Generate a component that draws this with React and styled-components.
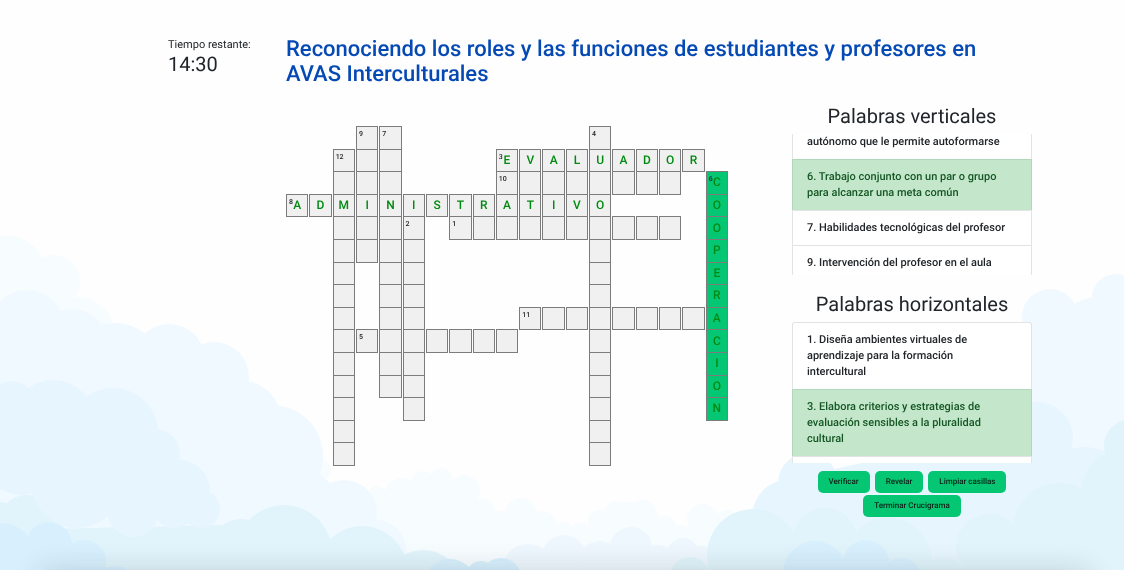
import React, { useState } from "react";
import styled, { createGlobalStyle } from "styled-components";

const GlobalStyle = createGlobalStyle`
  *, *::before, *::after { box-sizing: border-box; }
  html, body { margin: 0; }
  body {
    background: #fefefe;
    color: #212529;
    font-family: Roboto, "Liberation Sans", sans-serif;
    font-size: 11px;
    text-rendering: geometricPrecision;
  }
`;

const Sky = styled.svg`
  position: fixed;
  inset: 0;
  width: 100%;
  height: 100%;
  z-index: -1;
`;

const Page = styled.div`
  padding: 37px 92px 36px 168px;
`;

const Header = styled.header`
  display: flex;
`;

const Timer = styled.div`
  flex: 0 0 118px;
  line-height: 15px;
`;

const TimeLeft = styled.strong`
  display: block;
  font-size: 20px;
  font-weight: 400;
  line-height: 24px;
`;

const Title = styled.h1`
  flex: 1;
  margin: 0;
  padding-right: 16px;
  color: #0549b5;
  font-size: 22px;
  font-weight: 500;
  line-height: 25px;
`;

const Content = styled.main`
  display: flex;
  align-items: flex-start;
  gap: 64px;
  margin-top: 17px;
  padding-left: 118px;
`;

const Board = styled.div`
  flex: 1;
  display: grid;
  grid-template-columns: repeat(19, minmax(0, 1fr));
  grid-template-rows: repeat(15, minmax(0, 1fr));
  column-gap: 1px;
  aspect-ratio: 442 / 339;
  margin-top: 22px;
`;

const Cell = styled.label`
  position: relative;
  display: flex;
  margin-bottom: -1px;
`;

const CellNumber = styled.span`
  position: absolute;
  top: 4px;
  left: 3px;
  font-size: 7px;
  font-weight: 500;
  line-height: 9px;
  pointer-events: none;
`;

const Letter = styled.input`
  width: 100%;
  min-width: 0;
  margin: 0;
  padding: 0 0 1px;
  border: 1px solid #7c7c7c;
  border-radius: 0;
  outline: 0;
  background: ${(p) => (p.$solved ? "#05c773" : "#f0f0f0")};
  color: #008a10;
  font: 500 12px Roboto, "Liberation Sans", sans-serif;
  text-align: center;
  text-rendering: inherit;
  text-transform: uppercase;
`;

const Sidebar = styled.aside`
  flex: 0 0 240px;
`;

const ListTitle = styled.h2`
  margin: 0 0 6px;
  font-size: 20px;
  font-weight: 400;
  line-height: 24px;
  text-align: center;
`;

const ClueList = styled.ul`
  height: 141px;
  margin: 0 0 ${(p) => (p.$last ? 8 : 17)}px;
  padding: 0;
  overflow-y: auto;
  scrollbar-width: none;
  list-style: none;
`;

const Clue = styled.li`
  min-height: ${(p) => (p.$continued ? 25 : 35)}px;
  padding: ${(p) => (p.$continued ? 0 : 9)}px 20px 9px 14px;
  border: 1px solid ${(p) => (p.$solved ? "#b1d8ba" : "#e2e3e4")};
  border-width: ${(p) => (p.$continued ? 0 : 1)}px 1px 0;
  border-radius: ${(p) => (p.$first ? "3px 3px 0 0" : "0")};
  background: ${(p) => (p.$solved ? "#c4e7cb" : "#fff")};
  color: ${(p) => (p.$solved ? "#155724" : "#212529")};
  font-weight: 500;
  line-height: 16px;
`;

const Actions = styled.div`
  display: flex;
  flex-wrap: wrap;
  justify-content: center;
  gap: 2px 5px;
  padding: 0 20px;
`;

const Button = styled.button`
  height: 22px;
  padding: 0 11px 1px;
  border: 0;
  border-radius: 5px;
  background: #05c773;
  color: #0c2418;
  font: 500 8px/12px Roboto, "Liberation Sans", sans-serif;
  text-rendering: inherit;
  cursor: pointer;
`;

const words = [
  { number: 9, row: 1, col: 4, length: 6, down: true },
  { number: 7, row: 1, col: 5, length: 12, down: true },
  { number: 4, row: 1, col: 14, length: 15, down: true },
  { number: 12, row: 2, col: 3, length: 14, down: true },
  { number: 3, row: 2, col: 10, length: 9, answer: "EVALUADOR" },
  { number: 10, row: 3, col: 10, length: 8 },
  { number: 6, row: 3, col: 19, length: 11, down: true, answer: "COOPERACION", solved: true },
  { number: 8, row: 4, col: 1, length: 14, answer: "ADMINISTRATIVO" },
  { number: 2, row: 5, col: 6, length: 9, down: true },
  { number: 1, row: 5, col: 8, length: 10 },
  { number: 11, row: 9, col: 11, length: 8 },
  { number: 5, row: 10, col: 4, length: 7 },
];

function buildCells() {
  const cells = new Map();
  words.forEach((word) => {
    for (let i = 0; i < word.length; i += 1) {
      const row = word.row + (word.down ? i : 0);
      const col = word.col + (word.down ? 0 : i);
      const key = `${row}-${col}`;
      const cell = cells.get(key) || { key, row, col, letter: "" };
      if (i === 0) cell.number = word.number;
      if (word.answer) cell.letter = word.answer[i];
      if (word.solved) cell.solved = true;
      cells.set(key, cell);
    }
  });
  return [...cells.values()].sort((a, b) => a.row - b.row || a.col - b.col);
}

const initialCells = buildCells();

// Each layer is painted back to front: an outline polygon plus [cx, cy, r] puffs.
const clouds = [
  {
    fill: "#f7fcff",
    shapes: ["0,270 50,270 80,310 112,330 112,400 0,400", "376,495 440,485 470,495 500,515 520,520 560,535 590,525 610,512 620,502 640,502 680,535 700,525 740,525 740,570 376,570"],
    puffs: [[8, 273, 37], [54, 281, 26], [77, 335, 38], [321, 470, 10], [377, 496, 10], [401, 494, 16], [423, 482, 11], [441, 479, 11], [464, 491, 16], [483, 511, 12], [499, 522, 11], [521, 514, 16], [543, 524, 13], [563, 533, 11], [580, 534, 11], [599, 521, 11], [617, 513, 12], [642, 516, 16], [665, 527, 11], [682, 536, 11], [703, 520, 16], [727, 521, 11]],
  },
  {
    fill: "#f0f9ff",
    shapes: ["0,320 27,300 72,320 115,335 169,335 214,360 240,390 270,420 315,470 330,483 344,490 376,530 400,570 0,570", "1030,330 1060,305 1100,305 1124,290 1124,570 1030,570"],
    puffs: [[27, 327, 37], [72, 344, 35], [115, 371, 48], [169, 360, 36], [214, 377, 35], [242, 420, 39], [272, 456, 51], [344, 513, 33], [376, 550, 30], [1050, 317, 28], [1098, 340, 43], [1116, 298, 24]],
  },
  {
    fill: "#eef7fd",
    shapes: ["520,570 540,552 600,552 630,540 660,552 720,558 720,570"],
    puffs: [[528, 570, 26], [564, 557, 22], [600, 563, 22], [631, 548, 21], [658, 560, 15], [683, 554, 16], [702, 560, 14]],
  },
  {
    fill: "#e7f5fe",
    shapes: ["780,500 800,480 830,470 1010,430 1050,430 1071,452 1104,452 1124,455 1124,570 770,570"],
    puffs: [[1037, 438, 36], [1084, 497, 50], [808, 483, 30], [790, 517, 38]],
  },
  {
    fill: "#e1f4fb",
    shapes: ["0,530 225,525 250,530 330,545 405,560 420,570 0,570", "740,570 760,540 800,530 890,560 930,570", "980,560 1020,530 1100,480 1124,470 1124,570 960,570"],
    puffs: [[-2, 530, 28], [27, 525, 30], [241, 549, 30], [284, 553, 48], [362, 571, 45], [423, 590, 40], [690, 577, 20], [753, 555, 46], [825, 540, 32], [888, 562, 44], [944, 577, 20], [989, 547, 33], [1059, 529, 46], [1122, 490, 40], [1131, 446, 27]],
  },
  {
    fill: "#e7f5fe",
    shapes: ["0,400 50,400 113,410 160,450 190,480 200,510 150,515 100,515 50,490 0,480"],
    puffs: [[12, 403, 22], [53, 422, 42], [113, 433, 45], [155, 454, 25], [179, 491, 31], [201, 509, 19], [175, 505, 23], [133, 511, 26], [77, 482, 46], [22, 455, 40]],
  },
  {
    fill: "#d8f0fd",
    shapes: ["0,550 90,550 100,570 0,570"],
    puffs: [[2, 555, 32], [49, 545, 23], [84, 562, 22], [115, 590, 24], [450, 585, 26], [481, 576, 15], [501, 578, 20], [815, 573, 32], [866, 563, 23], [901, 578, 20]],
  },
];

function CloudySky() {
  return (
    <Sky viewBox="0 0 1124 570" preserveAspectRatio="xMidYMax slice" aria-hidden="true">
      <defs>
        <filter id="soft" x="-10%" y="-400%" width="120%" height="900%">
          <feGaussianBlur stdDeviation="15" />
        </filter>
      </defs>
      {clouds.map((layer, i) => (
        <g key={i} fill={layer.fill}>
          {layer.shapes.map((points) => (
            <polygon key={points} points={points} />
          ))}
          {layer.puffs.map(([cx, cy, r]) => (
            <circle key={`${cx}-${cy}`} cx={cx} cy={cy} r={r} />
          ))}
        </g>
      ))}
      <rect x="40" y="571" width="1050" height="40" fill="#001820" opacity="0.16" filter="url(#soft)" />
    </Sky>
  );
}

function Crossword() {
  const [cells, setCells] = useState(initialCells);
  const update = (key, letter) =>
    setCells((all) => all.map((c) => (c.key === key ? { ...c, letter } : c)));

  return (
    <Board>
      {cells.map((cell) => (
        <Cell key={cell.key} style={{ gridRow: cell.row, gridColumn: cell.col }}>
          <Letter
            type="text"
            maxLength={1}
            aria-label={`Fila ${cell.row}, columna ${cell.col}`}
            value={cell.letter}
            $solved={cell.solved}
            onChange={(e) => update(cell.key, e.target.value)}
          />
          {cell.number && <CellNumber>{cell.number}</CellNumber>}
        </Cell>
      ))}
    </Board>
  );
}

export default function App() {
  return (
    <>
      <GlobalStyle />
      <CloudySky />
      <Page>
        <Header>
          <Timer>
            Tiempo restante:
            <TimeLeft>14:30</TimeLeft>
          </Timer>
          <Title>
            Reconociendo los roles y las funciones de estudiantes y profesores en AVAS
            Interculturales
          </Title>
        </Header>
        <Content>
          <Crossword />
          <Sidebar>
            <ListTitle>Palabras verticales</ListTitle>
            <ClueList>
              <Clue $continued>autónomo que le permite autoformarse</Clue>
              <Clue $solved>6. Trabajo conjunto con un par o grupo para alcanzar una meta común</Clue>
              <Clue>7. Habilidades tecnológicas del profesor</Clue>
              <Clue>9. Intervención del profesor en el aula</Clue>
            </ClueList>
            <ListTitle>Palabras horizontales</ListTitle>
            <ClueList $last>
              <Clue $first>1. Diseña ambientes virtuales de aprendizaje para la formación intercultural</Clue>
              <Clue $solved>3. Elabora criterios y estrategias de evaluación sensibles a la pluralidad cultural</Clue>
              <Clue />
            </ClueList>
            <Actions>
              <Button type="button">Verificar</Button>
              <Button type="button">Revelar</Button>
              <Button type="button">Limpiar casillas</Button>
              <Button type="button">Terminar Crucigrama</Button>
            </Actions>
          </Sidebar>
        </Content>
      </Page>
    </>
  );
}
